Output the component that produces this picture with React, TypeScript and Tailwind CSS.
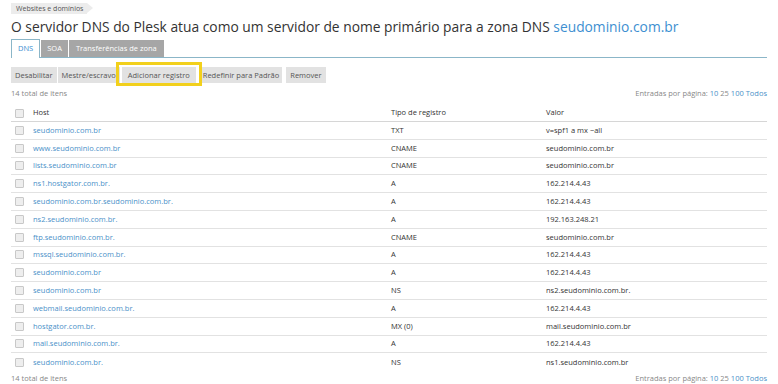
const rows: [string, string, string][] = [
  ['seudominio.com.br', 'TXT', 'v=spf1 a mx ~all'],
  ['www.seudominio.com.br', 'CNAME', 'seudominio.com.br'],
  ['lists.seudominio.com.br', 'CNAME', 'seudominio.com.br'],
  ['ns1.hostgator.com.br.', 'A', '162.214.4.43'],
  ['seudominio.com.br.seudominio.com.br.', 'A', '162.214.4.43'],
  ['ns2.seudominio.com.br.', 'A', '192.163.248.21'],
  ['ftp.seudominio.com.br.', 'CNAME', 'seudominio.com.br'],
  ['mssql.seudominio.com.br.', 'A', '162.214.4.43'],
  ['seudominio.com.br', 'A', '162.214.4.43'],
  ['seudominio.com.br', 'NS', 'ns2.seudominio.com.br.'],
  ['webmail.seudominio.com.br.', 'A', '162.214.4.43'],
  ['hostgator.com.br.', 'MX (0)', 'mail.seudominio.com.br'],
  ['mail.seudominio.com.br.', 'A', '162.214.4.43'],
  ['seudominio.com.br.', 'NS', 'ns1.seudominio.com.br'],
];

function Check() {
  return <span className="block w-[9px] h-[9px] rounded-[1px] border border-[#c8c8c8] bg-[#eeeeee]" />;
}

function Paging() {
  return (
    <span className="text-[#888]">
      Entradas por página: <span className="text-[#4a90c8]">10</span>{' '}
      <span className="text-[#888]">25</span> <span className="text-[#4a90c8]">100 Todos</span>
    </span>
  );
}

export default function App() {
  return (
    <div className="w-[778px] h-[384px] overflow-hidden bg-white px-[11px] text-[7.5px] text-[#333] font-['Open_Sans',sans-serif]">
      <div className="pt-[3px] flex">
        <div className="relative h-[11px] bg-[#ececec] pl-[5px] pr-[4px] leading-[11px] text-[7px] text-[#555]">
          Websites e domínios
          <span className="absolute right-[-6px] top-0 w-0 h-0 border-y-[5.5px] border-y-transparent border-l-[6px] border-l-[#ececec]" />
        </div>
      </div>
      <h1 className="mt-[3px] text-[13.8px] leading-[20px] text-[#333] whitespace-nowrap">
        O servidor DNS do Plesk atua como um servidor de nome primário para a zona DNS{' '}
        <span className="text-[#3d8fd1]">seudominio.com.br</span>
      </h1>
      <div className="mt-[3px] flex items-end border-b border-[#8bb6c8] h-[18px]">
        <div className="px-[6px] leading-[17px] bg-white border border-b-0 border-[#8bb6c8] text-[#3d8fd1] mb-[-1px] h-[19px]">DNS</div>
        <div className="ml-[1px] h-[17px] px-[6px] leading-[17px] bg-[#a6a6a6] text-white">SOA</div>
        <div className="ml-[1px] h-[17px] px-[7px] leading-[17px] bg-[#a6a6a6] text-white">Transferências de zona</div>
      </div>
      <div className="mt-[8px] flex items-center h-[18px] text-[#555]">
        <div className="h-[16px] px-[4px] leading-[16px] bg-[#e2e2e2]">Desabilitar</div>
        <div className="ml-[1px] h-[16px] px-[4px] leading-[16px] bg-[#e2e2e2]">Mestre/escravo</div>
        <div className="relative ml-[2px] h-[16px] px-[6px] leading-[16px] bg-[#e2e2e2]">
          Adicionar registro
          <span className="absolute left-[-6px] right-[-6px] top-[-5px] bottom-[-3px] border-[3px] border-[#f2d01c]" />
        </div>
        <div className="ml-[4px] h-[16px] px-[3px] leading-[16px] bg-[#e2e2e2]">Redefinir para Padrão</div>
        <div className="ml-[4px] h-[16px] px-[4px] leading-[16px] bg-[#e2e2e2]">Remover</div>
      </div>
      <div className="mt-[2px] flex justify-between h-[14px] leading-[14px] text-[#888]">
        <span>14 total de itens</span>
        <Paging />
      </div>
      <div className="mt-[5px]">
        <div className="flex items-center h-[17px] border-b border-[#d6d6d6]">
          <div className="w-[22px] pl-[4px]"><Check /></div>
          <div className="w-[358px]">Host</div>
          <div className="w-[155px]">Tipo de registro</div>
          <div>Valor</div>
        </div>
        {rows.map(([host, type, value], i) => (
          <div key={i} className={`flex items-center h-[17.8px] ${i < rows.length - 1 ? 'border-b border-[#e2e2e2]' : ''}`}>
            <div className="w-[22px] pl-[4px]"><Check /></div>
            <div className="w-[358px] text-[#4a90c8]">{host}</div>
            <div className="w-[155px]">{type}</div>
            <div>{value}</div>
          </div>
        ))}
      </div>
      <div className="flex justify-between h-[14px] leading-[14px] text-[#888]">
        <span>14 total de itens</span>
        <Paging />
      </div>
    </div>
  );
}
